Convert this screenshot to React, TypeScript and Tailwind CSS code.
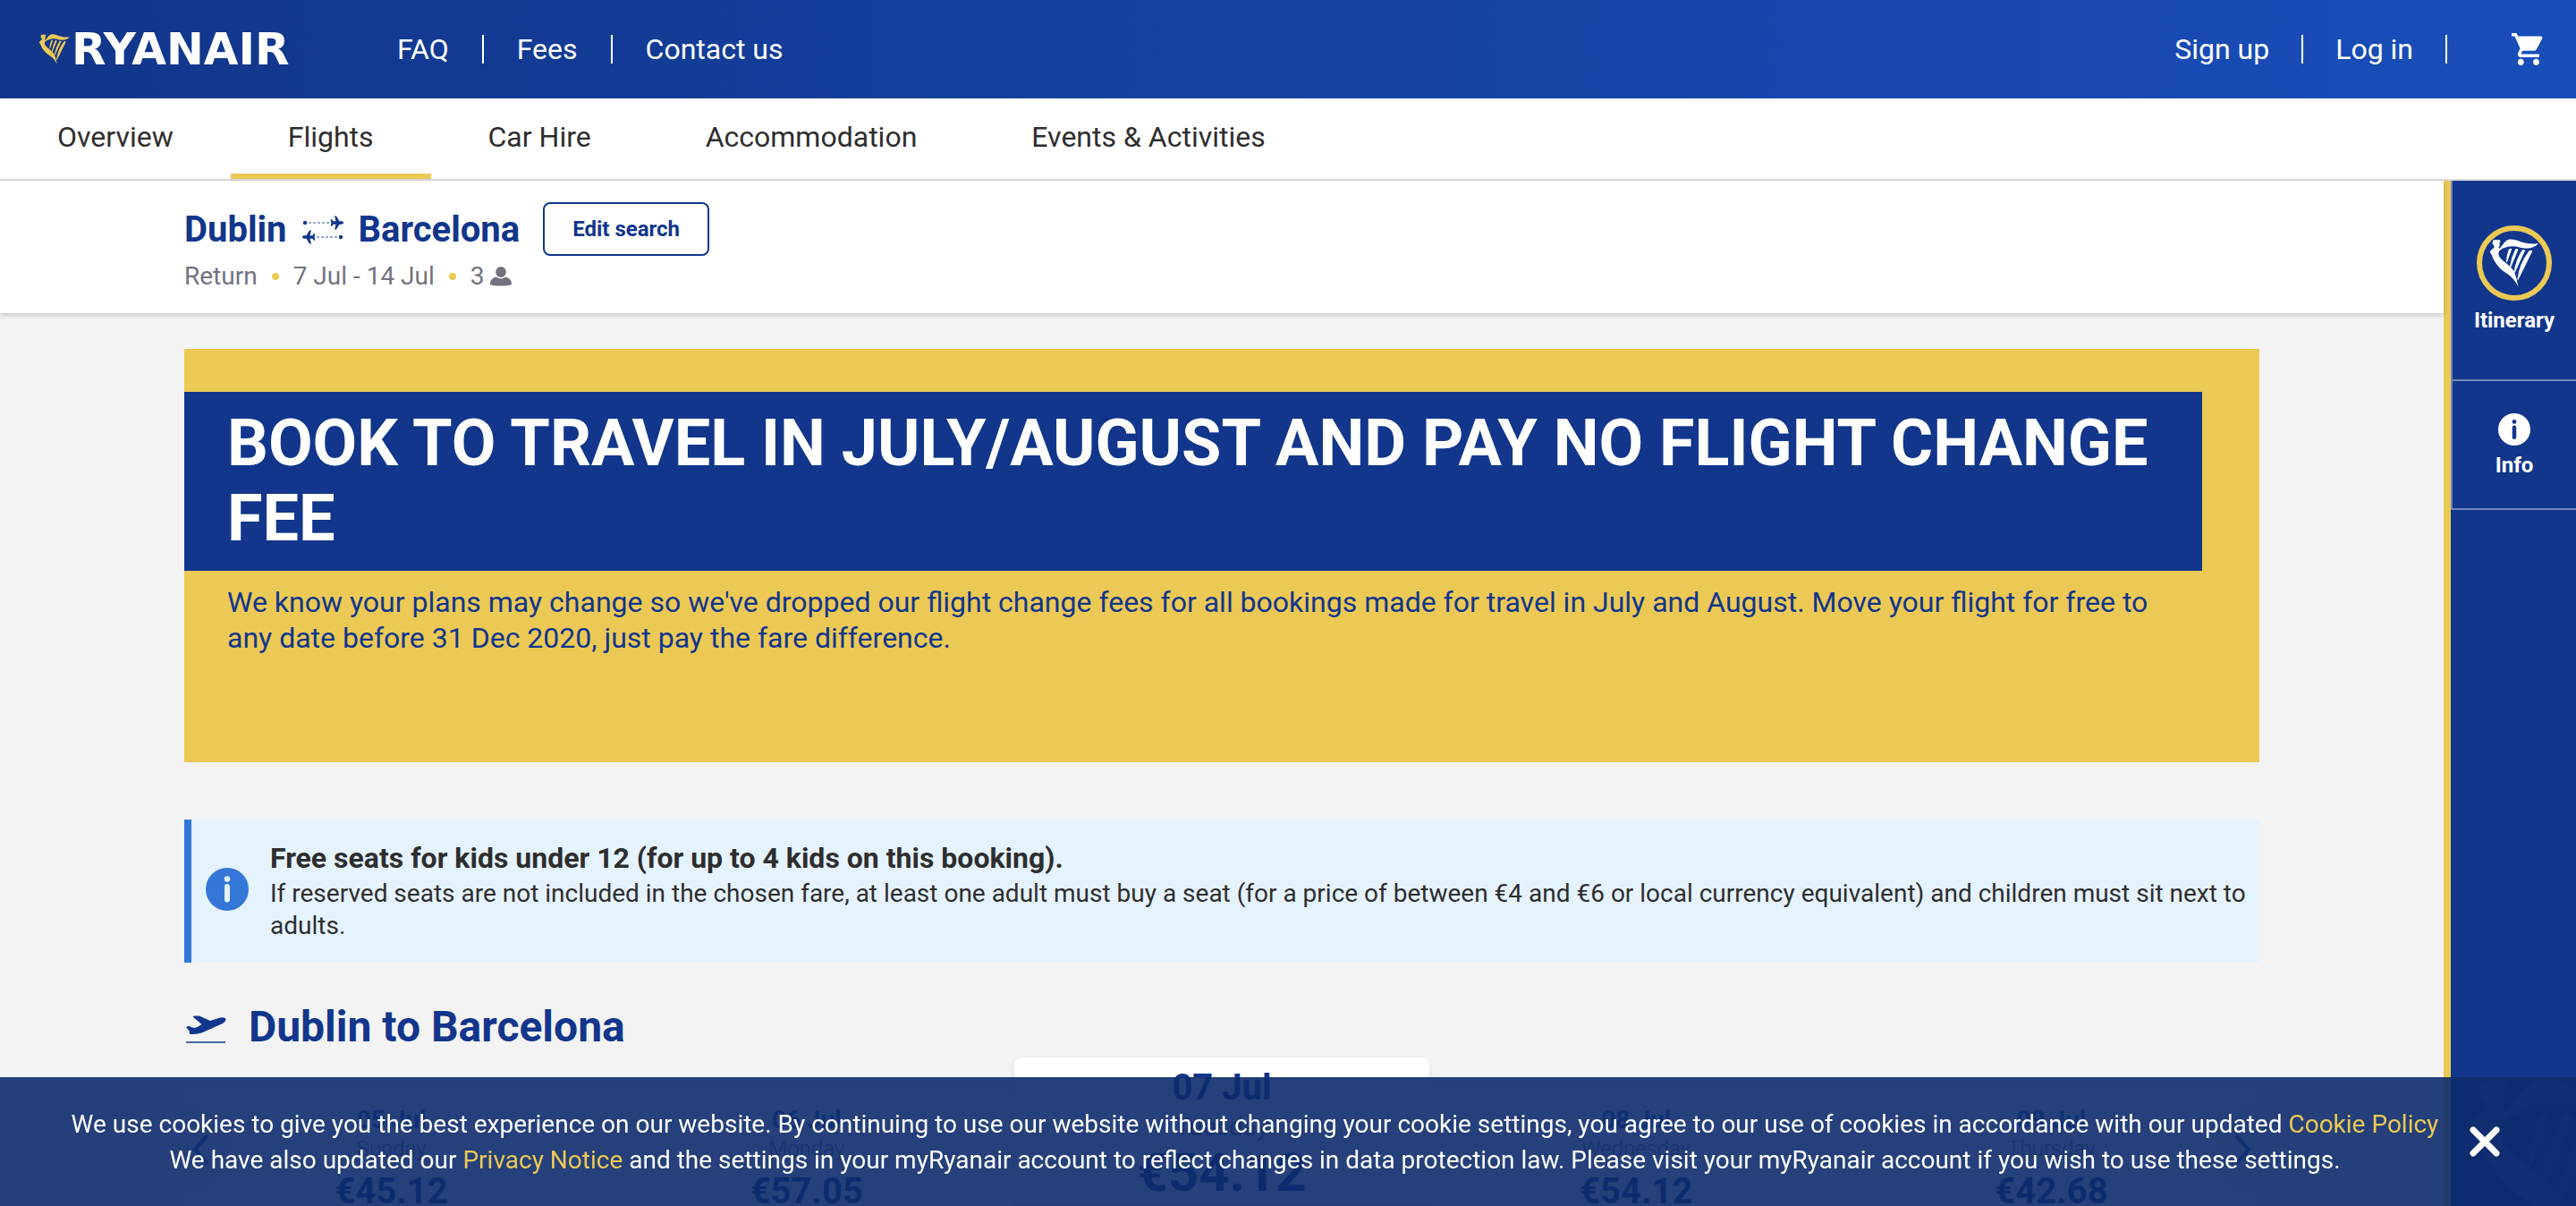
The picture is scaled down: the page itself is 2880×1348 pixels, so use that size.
import React from 'react';

const font = "font-['Roboto',sans-serif]";

function Harp({ className }: { className: string }) {
  return (
    <svg viewBox="0 0 163 161" className={className} fill="currentColor" aria-hidden="true">
      <path d="M10 4c6-2 17-2 23-1 2 4 1 8-2 11l2 7-5 8 4 2C42 22 48 7 60 2c14-4 28 1 42 6 18 6 40 11 61 5-8 11-22 18-42 18-18 0-30-8-48-7-18 1-36 8-43 17-3 8-2 14 4 22 10 13 30 22 44 42 9 14 12 34 17 56-12-24-24-36-43-48C30 99 15 78 8 60 6 54 4 50 0 46c-1-4 1-7 4-9l10-9-1-7c-5-2-7-10-3-17Z" />
      <path d="M64 33q6-4 9 1l-16 44q-3 1-3-2Q56 50 64 33Z" />
      <path d="M85 34q6-4 10 1L70 95q-4 2-4-2Q72 60 85 34Z" />
      <path d="M107 38q6-5 11 0L84 112q-4 2-4-2Q87 70 107 38Z" />
      <path d="M131 40q7-5 12 0L95 137q-4 2-3-3 6-50 39-94Z" />
    </svg>
  );
}

function InfoIcon({ className }: { className: string }) {
  return (
    <svg viewBox="0 0 48 48" className={className} aria-hidden="true">
      <circle cx="24" cy="24" r="24" fill="currentColor" />
      <circle cx="24" cy="12.500" r="3.200" className="fill-(--glyph)" />
      <path d="M24 21v14.500" className="stroke-(--glyph)" strokeWidth="6" strokeLinecap="round" />
    </svg>
  );
}

function Plane() {
  return (
    <path
      d="M0 0c0-1.100-1-1.700-2.500-1.700H-4.500L-8-7.500h-2l1.600 5.800h-3l-1.500-2h-1.500L-13.600 0l-.8 3.700h1.500l1.500-2h3L-10 7.500h2l3.500-5.800h2C-1 1.700 0 1.100 0 0Z"
      fill="currentColor"
    />
  );
}

function SwapIcon() {
  return (
    <svg viewBox="0 0 48 32" className="h-8 w-12" aria-hidden="true">
      <circle cx="4" cy="8" r="2.200" fill="currentColor" />
      <path d="M8 8h23" stroke="currentColor" strokeWidth="1.600" strokeDasharray="3 2" opacity=".55" />
      <g transform="translate(47 8)"><Plane /></g>
      <circle cx="44" cy="24" r="2.200" fill="currentColor" />
      <path d="M17 24h23" stroke="currentColor" strokeWidth="1.600" strokeDasharray="3 2" opacity=".55" />
      <g transform="translate(1 24) scale(-1 1)"><Plane /></g>
    </svg>
  );
}

const tabs = ['Overview', 'Flights', 'Car Hire', 'Accommodation', 'Events & Activities'];

const days = [
  { date: '05 Jul', day: 'Sunday', price: '€45.12' },
  { date: '06 Jul', day: 'Monday', price: '€57.05' },
  { date: '07 Jul', day: 'Tuesday', price: '€54.12', selected: true },
  { date: '08 Jul', day: 'Wednesday', price: '€54.12' },
  { date: '09 Jul', day: 'Thursday', price: '€42.68' },
];

const Bar = () => <span className="h-8 w-0.5 bg-white" />;

export default function App() {
  return (
    <div className={`${font} flex h-screen flex-col overflow-hidden bg-[#f3f3f3] text-[#2e2e2e]`}>
      <header className="flex h-[110px] shrink-0 items-center bg-linear-to-r from-[#11368b] to-[#194eba] text-[32px] text-white">
        <a href="#home" className="ml-11 flex w-[400px] items-center gap-0.5">
          <Harp className="h-[34px] w-[34px] text-[#ecc955]" />
          <span className="font-['DejaVu_Sans',sans-serif] text-[50px] leading-none font-bold">RYANAIR</span>
        </a>
        <nav className="flex items-center gap-[37px]">
          <a href="#faq">FAQ</a>
          <Bar />
          <a href="#fees">Fees</a>
          <Bar />
          <a href="#contact">Contact us</a>
        </nav>
        <div className="mr-9 ml-auto flex items-center gap-9">
          <button>Sign up</button>
          <Bar />
          <button>Log in</button>
          <Bar />
          <button aria-label="Basket" className="ml-9">
            <svg viewBox="1 2 21 20" className="size-9" preserveAspectRatio="none" fill="currentColor">
              <path d="M7 18c-1.100 0-1.990.9-1.990 2S5.900 22 7 22s2-.9 2-2-.9-2-2-2zM1 2v2h2l3.600 7.590-1.350 2.450c-.16.280-.25.610-.25.960 0 1.100.9 2 2 2h12v-2H7.420c-.14 0-.25-.11-.25-.25l.030-.12.900-1.630h7.450c.75 0 1.410-.41 1.750-1.030l3.580-6.490A1 1 0 0 0 20 4H5.210l-.94-2H1zm16 16c-1.100 0-1.990.9-1.990 2s.89 2 1.990 2 2-.9 2-2-.9-2-2-2z" />
            </svg>
          </button>
        </div>
      </header>

      <nav className="flex h-[92px] shrink-0 border-b-2 border-[#dcdcdc] bg-white text-[32px]">
        {tabs.map((t) => (
          <a
            key={t}
            href="#tab"
            className={
              t === 'Flights'
                ? 'border-b-6 border-[#ecc955] px-16 pt-[19px]'
                : 'px-16 pt-[19px]'
            }
          >
            {t}
          </a>
        ))}
      </nav>

      <div className="flex min-h-0 grow">
        <div className="flex min-w-0 grow flex-col">
          <section className="z-10 h-[148px] shrink-0 bg-white px-[206px] pt-6 shadow-[0_2px_6px_rgba(0,0,0,0.200)]">
            <div className="flex h-[60px] items-center text-[40px] font-bold text-[#11368b]">
              <h1 className="flex items-center gap-4 pt-0.5">
                Dublin <SwapIcon /> Barcelona
              </h1>
              <button className="ml-[26px] h-[60px] rounded-lg border-2 border-[#11368b] px-[31px] text-2xl font-bold">
                Edit search
              </button>
            </div>
            <p className="mt-[3px] flex items-center text-[28px] leading-10 text-[#72737f]">
              Return
              <span className="mx-4 size-2 rounded-full bg-[#ecc955]" />7 Jul - 14 Jul
              <span className="mx-4 size-2 rounded-full bg-[#ecc955]" />3
              <svg viewBox="0 0 24 22" className="ml-1.5 h-[22px] w-6" fill="currentColor" role="img" aria-label="passengers">
                <ellipse cx="12" cy="6" rx="5.800" ry="6" />
                <path d="M0 20c0-5 2-7 7-8.500 3 2.500 7 2.500 10 0 5 1.500 7 3.500 7 8.500-5 2-19 2-24 0Z" />
              </svg>
            </p>
          </section>

          <main className="min-h-0 grow overflow-hidden px-[206px] pt-10">
            <section className="h-[462px] bg-[#ecc955] pt-12 text-[#11368b]">
              <h2 className="mr-16 bg-[#11368b] px-12 py-4 text-[72px] leading-[84px] font-bold text-white">
                BOOK TO TRAVEL IN JULY/AUGUST AND PAY NO FLIGHT CHANGE FEE
              </h2>
              <p className="mr-16 px-12 pt-[15px] text-[32px] leading-10">
                We know your plans may change so we've dropped our flight change fees for all bookings made for travel
                in July and August. Move your flight for free to any date before 31 Dec 2020, just pay the fare
                difference.
              </p>
            </section>

            <section className="mt-16 flex h-40 items-center border-l-8 border-[#3577d8] bg-[#e5f3ff] pl-4 [--glyph:#e5f3ff]">
              <InfoIcon className="mb-1 size-12 shrink-0 text-[#3577d8]" />
              <div className="ml-6 pr-2">
                <h3 className="mb-0.5 text-[32px] leading-10 font-bold">
                  Free seats for kids under 12 (for up to 4 kids on this booking).
                </h3>
                <p className="text-[28px] leading-9">
                  If reserved seats are not included in the chosen fare, at least one adult must buy a seat (for a price
                  of between €4 and €6 or local currency equivalent) and children must sit next to adults.
                </p>
              </div>
            </section>

            <h2 className="mt-11 flex items-center gap-6 text-[48px] leading-14 font-bold text-[#11368b]">
              <svg viewBox="0 0 48 40" className="h-10 w-12" fill="currentColor" aria-hidden="true">
                <path d="M2.300 20.300q1-1.500 2.700-1.600L9 20.500q3 .8 6-.8l4.500-2.700-9.800-8.600q0-1 1.600-1H16q1 0 2 .6L29 13l11-3.500q4-1 6 .8 1.300 2-.7 4-1.200 1.200-3 2L20 26.300Q15 28.300 8 28q-2 0-2.300-1.300V24Q3.500 22.500 2.300 20.300Z" />
                <path d="M2 36.200h44v1.600H2z" />
              </svg>
              Dublin to Barcelona
            </h2>

            <div className="relative mt-1.5 flex items-start">
              {days.map((d) =>
                d.selected ? (
                  <button
                    key={d.date}
                    className="flex h-[164px] flex-1 flex-col items-center justify-start rounded-t-lg bg-white pt-3.5 text-[#11368b] shadow-[0_2px_6px_rgba(0,0,0,0.080)]"
                  >
                    <span className="text-[40px] leading-10 font-bold">{d.date}</span>
                    <span className="text-[28px] leading-12 text-[#72737f]">{d.day}</span>
                    <span className="text-[60px] leading-[54px] font-bold">{d.price}</span>
                  </button>
                ) : (
                  <button
                    key={d.date}
                    className="mt-9 flex h-[130px] flex-1 flex-col items-center justify-start border-r border-[#e8e8e8] bg-[#fafafa] pt-4 text-[#11368b]"
                  >
                    <span className="text-[28px] leading-9 font-bold text-[#2f5fc0]">{d.date}</span>
                    <span className="text-2xl leading-7 font-light text-[#72737f]">{d.day}</span>
                    <span className="mt-4 text-[40px] leading-9 font-bold">{d.price}</span>
                  </button>
                ),
              )}
              <button
                aria-label="Previous days"
                className="absolute top-[51px] left-0 h-[104px] w-[52px] rounded-r-full bg-[#eeeeee] pl-2 text-[#2f5fc0]"
              >
                <svg viewBox="0 0 20 36" className="h-9 w-5" fill="none" stroke="currentColor" strokeWidth="4">
                  <path d="M18 2 4 18l14 16" />
                </svg>
              </button>
              <button
                aria-label="Next days"
                className="absolute top-[51px] right-0 h-[104px] w-[52px] rounded-l-full bg-[#eeeeee] pl-6 text-[#2f5fc0]"
              >
                <svg viewBox="0 0 20 36" className="h-9 w-5" fill="none" stroke="currentColor" strokeWidth="4">
                  <path d="m2 2 14 16L2 34" />
                </svg>
              </button>
            </div>
          </main>
        </div>

        <aside className="relative w-[148px] shrink-0 overflow-hidden border-l-8 border-[#ecc955] bg-[#11368b] text-2xl font-bold text-white">
          <button className="flex h-[224px] w-full flex-col items-center border-b-2 border-l-2 border-[#7087bb] pt-[50px]">
            <span className="flex size-[84px] items-center justify-center rounded-full border-6 border-[#ecc955]">
              <Harp className="size-[54px]" />
            </span>
            <span className="mt-1 leading-9">Itinerary</span>
          </button>
          <button className="flex h-36 w-full flex-col items-center border-b-2 border-l-2 border-[#7087bb] pt-9 [--glyph:#11368b]">
            <InfoIcon className="size-9" />
            <span className="mt-1 leading-9">Info</span>
          </button>
          <div className="absolute -bottom-[54px] left-[22px] size-[198px] opacity-10">
            <Harp className="size-full" />
          </div>
        </aside>
      </div>

      <div
        role="dialog"
        aria-label="Cookies"
        className="fixed inset-x-0 bottom-0 z-20 flex h-36 items-center bg-[#0d2b6b]/90 text-white"
      >
        <p className="ml-14 grow pt-0.5 text-center text-[28px] leading-10">
          We use cookies to give you the best experience on our website. By continuing to use our website without
          changing your cookie settings, you agree to our use of cookies in accordance with our updated{' '}
          <a href="#cookies" className="text-[#ecc955]">Cookie Policy</a>
          <br />
          We have also updated our <a href="#privacy" className="text-[#ecc955]">Privacy Notice</a> and the settings in
          your myRyanair account to reflect changes in data protection law. Please visit your myRyanair account if you
          wish to use these settings.
        </p>
        <button aria-label="Close" className="mr-[85px] ml-[11px] shrink-0">
          <svg viewBox="0 0 34 34" className="size-[34px]" stroke="currentColor" strokeWidth="7" strokeLinecap="round">
            <path d="M4 4l26 26M30 4L4 30" />
          </svg>
        </button>
      </div>
    </div>
  );
}
